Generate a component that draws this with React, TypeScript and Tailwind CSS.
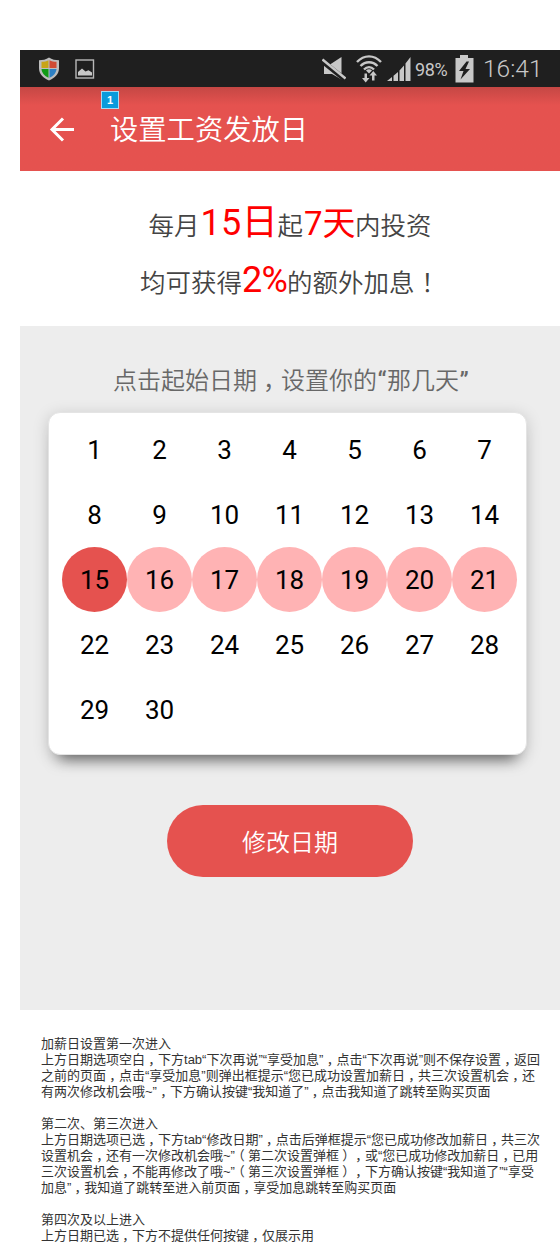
import { Fragment } from "react";

const days = Array.from({ length: 30 }, (_, i) => i + 1);

/* Full-width punctuation is set half-width and centred in its own em box. */
function Text({ children }: { children: string }) {
  return (
    <>
      {children.split(/([，！（）])/).map((part, i) =>
        /^[，！（）]$/.test(part) ? (
          <span key={i} className="inline-block w-[1em] text-center [font-feature-settings:'halt']">{part}</span>
        ) : (
          <Fragment key={i}>{part}</Fragment>
        ),
      )}
    </>
  );
}

const notes = [
  "加薪日设置第一次进入",
  "上方日期选项空白，下方tab“下次再说”“享受加息”，点击“下次再说”则不保存设置，返回",
  "之前的页面，点击“享受加息”则弹出框提示“您已成功设置加薪日，共三次设置机会，还",
  "有两次修改机会哦~”，下方确认按键“我知道了”，点击我知道了跳转至购买页面",
  "",
  "第二次、第三次进入",
  "上方日期选项已选，下方tab“修改日期”，点击后弹框提示“您已成功修改加薪日，共三次",
  "设置机会，还有一次修改机会哦~”（第二次设置弹框），或“您已成功修改加薪日，已用",
  "三次设置机会，不能再修改了哦~”（第三次设置弹框），下方确认按键“我知道了”“享受",
  "加息”，我知道了跳转至进入前页面，享受加息跳转至购买页面",
  "",
  "第四次及以上进入",
  "上方日期已选，下方不提供任何按键，仅展示用",
];

function StatusBar() {
  return (
    <div className="flex h-[37px] items-center bg-[#1f1f1f] pt-px pl-[18px] text-[#c8c8c8]">
      <svg width="22" height="24" viewBox="0 0 22 24" className="shrink-0">
        <path d="M11 .5C8 2.7 4.500 3.200 1 3.200V11c0 6 4 10 10 12.500C17 21 21 17 21 11V3.200C17.500 3.200 14 2.700 11 .5Z" fill="#bdbdbd" />
        <path d="M10.500 3.200C8.500 4.300 6 4.700 3.500 4.800V11h7Z" fill="#c8a416" />
        <path d="M11.500 3.200c2 1.100 4.500 1.500 7 1.600V11h-7Z" fill="#cf4b34" />
        <path d="M3.500 12h7v8.800C6.500 19 3.800 16 3.500 12Z" fill="#109b16" />
        <path d="M18.500 12h-7v8.800C15.500 19 18.200 16 18.500 12Z" fill="#2d80c4" />
      </svg>
      <svg width="20" height="20" viewBox="0 0 20 20" className="ml-[15px] shrink-0">
        <rect x="1" y="1" width="17.500" height="18" fill="none" stroke="#b8b8b8" strokeWidth="1.400" />
        <path d="M3 16.500V13l4-3.500 3.500 3 3-1.300 3.500 2.300v3Z" fill="#c8c8c8" />
      </svg>
      <svg width="24" height="24" viewBox="0 0 24 24" className="ml-[227px] shrink-0">
        <path d="M2 7.500h6L19.500 0v22.500L10 17H2Z" fill="#c8c8c8" />
        <path d="M0 4 23 22.500" stroke="#1f1f1f" strokeWidth="5" />
        <path d="M.5 2.500 23.500 21.500" stroke="#c8c8c8" strokeWidth="2.400" />
      </svg>
      <svg width="26" height="28" viewBox="0 0 26 28" className="ml-[10px] shrink-0">
        <g fill="none" stroke="#c8c8c8" strokeWidth="2.400">
          <path d="M1 7C8 -.5 18 -.5 25 7" />
          <path d="M4.500 11c5-5 12-5 17 0" />
          <path d="M8 14.500c3-3 7-3 10 0" />
        </g>
        <path d="m10 15.500 3 3 3-3a4 4 0 0 0-6 0Z" fill="#c8c8c8" />
        <path d="M8.500 18.500h2.500v4.500h2.500l-3.800 4.500L6 23h2.500Z" fill="#c8c8c8" />
        <path d="M16 25.500h2.500v-5H21l-3.700-4.500-3.800 4.500H16Z" fill="#c8c8c8" />
      </svg>
      <svg width="24" height="24" viewBox="0 0 24 24" className="ml-[5px] shrink-0" fill="#c8c8c8">
        <path d="M0 24 5 20v4ZM6.500 18.700 11 15v9H6.500ZM12.500 13.500 17 8.500V24h-4.500ZM18.500 6.500 23.500 0v24h-5Z" />
      </svg>
      <span className="ml-[4px] w-[34px] shrink-0 pt-px font-['Roboto',sans-serif] text-[18px] leading-none font-normal tracking-[-0.4px]">98%</span>
      <svg width="19" height="28" viewBox="0 0 19 28" className="ml-[6px] shrink-0">
        <path d="M5 0h8v3h5.500v24.500H.5V3H5Z" fill="#c8c8c8" />
        <path d="M11.500 6.500 4 16h4.500l-3 8.500L15 14h-4.500l3.500-7.500Z" fill="#1f1f1f" />
      </svg>
      <span className="ml-[9px] pt-[1px] font-['Roboto',sans-serif] text-[24.5px] leading-none font-[350]">16:41</span>
    </div>
  );
}

export default function App() {
  return (
    <div className="h-[1260px] w-[560px] overflow-hidden bg-white pt-[50px] pl-5 font-['Roboto','Noto_Sans_CJK_SC',sans-serif] font-[350]">
      <StatusBar />
      <header className="relative flex h-[84px] items-center bg-[#e5524f] bg-linear-to-b from-[#c54744] to-[#e5524f] to-[18px] pl-[29px] text-white">
        <span className="absolute top-[4px] left-[81px] flex h-[18px] w-[18px] items-center justify-center border border-[#a8daf2] bg-[#0a9bdc] font-['Liberation_Sans',sans-serif] text-[11px] font-bold">1</span>
        <svg width="26" height="26" viewBox="0 0 26 26" fill="none" stroke="white" strokeWidth="3" className="shrink-0">
          <path d="M14 2.500 3 13.500l11 11M3 13.500h22" />
        </svg>
        <h1 className="ml-[35px] pt-[5px] text-[28.3px] leading-none">设置工资发放日</h1>
      </header>

      <section className="flex h-[155px] flex-col items-center pt-[24px] text-[25.5px] whitespace-nowrap text-[#444]">
        <p className="flex h-[57px] items-baseline leading-[57px]">
          每月<span className="ml-px w-[77px] text-[36px] font-normal tracking-[0.4px] text-[#f00]">15日</span>起
          <span className="ml-px w-[51px] text-[33px] font-normal text-[#f00]">7天</span>内投资
        </p>
        <p className="flex h-[57px] items-baseline leading-[57px]">
          均可获得<span className="w-[45px] text-[36px] font-normal tracking-[-0.7px] text-[#f00]">2%</span>
          <span><Text>的额外加息！</Text></span>
        </p>
      </section>

      <main className="h-[684px] bg-[#ededed] pt-[37px]">
        <p className="ml-[93px] h-[35px] text-[24px] leading-[36px] whitespace-nowrap text-[#686868]">
          <Text>点击起始日期，设置你的</Text>
          <span className="inline-block w-[10px] text-center font-medium">“</span>那几天<span className="inline-block w-[10px] text-center font-medium">”</span>
        </p>
        <div className="mt-[14px] ml-[28px] grid h-[343px] w-[479px] auto-rows-[65px] grid-cols-[repeat(7,65px)] rounded-[12px] border border-[#e4e4e4] bg-white pt-[4px] pl-[13px] shadow-[0_15px_15px_-11px_rgba(0,0,0,0.55),0_3px_16px_rgba(0,0,0,0.17)]">
          {days.map((d) => (
            <div
              key={d}
              className={`flex items-center justify-center rounded-full pt-px text-[26px] tracking-[-0.2px] font-normal text-black ${
                d === 15 ? "bg-[#e5524f]" : d > 15 && d < 22 ? "bg-[#ffb3b4]" : ""
              }`}
            >
              {d}
            </div>
          ))}
        </div>
        <button className="mt-[50px] ml-[147px] flex h-[72px] w-[246px] items-center justify-center rounded-full bg-[#e5524f] pt-[3px] text-[24px] text-white">
          修改日期
        </button>
      </main>

      <footer className="mt-[26px] ml-[21px] font-['Liberation_Sans','Noto_Sans_CJK_SC',sans-serif] text-[13px] font-normal text-[#333]">
        {notes.map((line, i) => (
          <p key={i} className="h-4 leading-4 whitespace-nowrap"><Text>{line}</Text></p>
        ))}
      </footer>
    </div>
  );
}
